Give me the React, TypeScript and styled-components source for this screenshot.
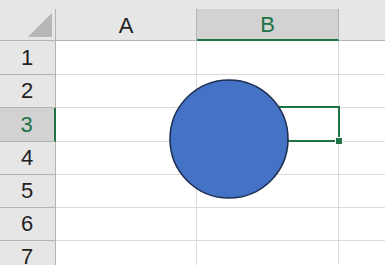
import React from "react"
import styled, { createGlobalStyle } from "styled-components"

const GREEN = "#217346"
const HEAD_BG = "#e6e6e6"
const HEAD_SEL = "#d2d2d2"
const HEAD_LINE = "#b4b4b4"
const GRID_LINE = "#dadada"

const cols = [
  { name: "A", width: 141 },
  { name: "B", width: 142 },
  { name: "C", width: 60 },
]
const rowHeights = [34, 33, 34, 33, 33, 33, 33]
const selCol = "B"
const selRow = 3

const Global = createGlobalStyle`
  html, body { margin: 0; padding: 0; background: #fff; overflow: hidden; }
  body { font-family: "Liberation Sans", Arial, sans-serif; }
`

export default function App() {
  return (
    <>
      <Global />
      <S.Sheet>
        <S.TopBand />
        <S.Row>
          <S.Corner>
            <S.Triangle />
          </S.Corner>
          {cols.map((c) => (
            <S.ColHead key={c.name} $w={c.width} $sel={c.name === selCol}>
              {c.name === "C" ? "" : c.name}
            </S.ColHead>
          ))}
        </S.Row>
        {rowHeights.map((h, i) => (
          <S.Row key={i}>
            <S.RowHead $h={h} $sel={i + 1 === selRow}>
              {i + 1}
            </S.RowHead>
            {cols.map((c) => (
              <S.Cell key={c.name} $w={c.width} $h={h} />
            ))}
          </S.Row>
        ))}
        <S.Selection>
          <S.Handle />
        </S.Selection>
        <S.Shape width="124" height="124" viewBox="0 0 124 124">
          <circle cx="62" cy="62" r="59" fill="#4472c4" stroke="#1f2f56" strokeWidth="1.6" />
        </S.Shape>
      </S.Sheet>
    </>
  )
}

const S = {
  Sheet: styled.div`
    position: relative;
    width: 385px;
    height: 265px;
    overflow: hidden;
    background: #fff;
  `,
  TopBand: styled.div`
    height: 9px;
    background: ${HEAD_BG};
  `,
  Row: styled.div`
    display: flex;
  `,
  Corner: styled.div`
    position: relative;
    box-sizing: border-box;
    flex: none;
    width: 56px;
    height: 32px;
    background: ${HEAD_BG};
    border-right: 1px solid ${HEAD_LINE};
    border-bottom: 1px solid ${HEAD_LINE};
  `,
  Triangle: styled.div`
    position: absolute;
    left: 28px;
    top: 4px;
    width: 24px;
    height: 24px;
    background: #b6b6b6;
    clip-path: polygon(100% 0, 100% 100%, 0 100%);
  `,
  ColHead: styled.div<{ $w: number; $sel: boolean }>`
    box-sizing: border-box;
    flex: none;
    width: ${({ $w }) => $w}px;
    height: 32px;
    display: flex;
    align-items: center;
    justify-content: center;
    padding-top: 2px;
    font-size: 22px;
    color: ${({ $sel }) => ($sel ? GREEN : "#222")};
    background: ${({ $sel }) => ($sel ? HEAD_SEL : HEAD_BG)};
    border-right: 1px solid ${HEAD_LINE};
    border-bottom: ${({ $sel }) => ($sel ? `2px solid ${GREEN}` : `1px solid ${HEAD_LINE}`)};
  `,
  RowHead: styled.div<{ $h: number; $sel: boolean }>`
    box-sizing: border-box;
    flex: none;
    width: 56px;
    height: ${({ $h }) => $h}px;
    display: flex;
    align-items: center;
    justify-content: center;
    padding-right: 1px;
    font-size: 22px;
    color: ${({ $sel }) => ($sel ? GREEN : "#222")};
    background: ${({ $sel }) => ($sel ? HEAD_SEL : HEAD_BG)};
    border-right: ${({ $sel }) => ($sel ? `2px solid ${GREEN}` : `1px solid ${HEAD_LINE}`)};
    border-bottom: 1px solid ${HEAD_LINE};
  `,
  Cell: styled.div<{ $w: number; $h: number }>`
    box-sizing: border-box;
    flex: none;
    width: ${({ $w }) => $w}px;
    height: ${({ $h }) => $h}px;
    border-right: 1px solid ${GRID_LINE};
    border-bottom: 1px solid ${GRID_LINE};
  `,
  Selection: styled.div`
    position: absolute;
    box-sizing: border-box;
    left: 195px;
    top: 106px;
    width: 145px;
    height: 36px;
    border: 2px solid ${GREEN};
  `,
  Handle: styled.div`
    position: absolute;
    right: -5px;
    bottom: -5px;
    width: 6px;
    height: 6px;
    background: ${GREEN};
    border: 1px solid #fff;
  `,
  Shape: styled.svg`
    position: absolute;
    left: 167px;
    top: 77px;
  `,
}
